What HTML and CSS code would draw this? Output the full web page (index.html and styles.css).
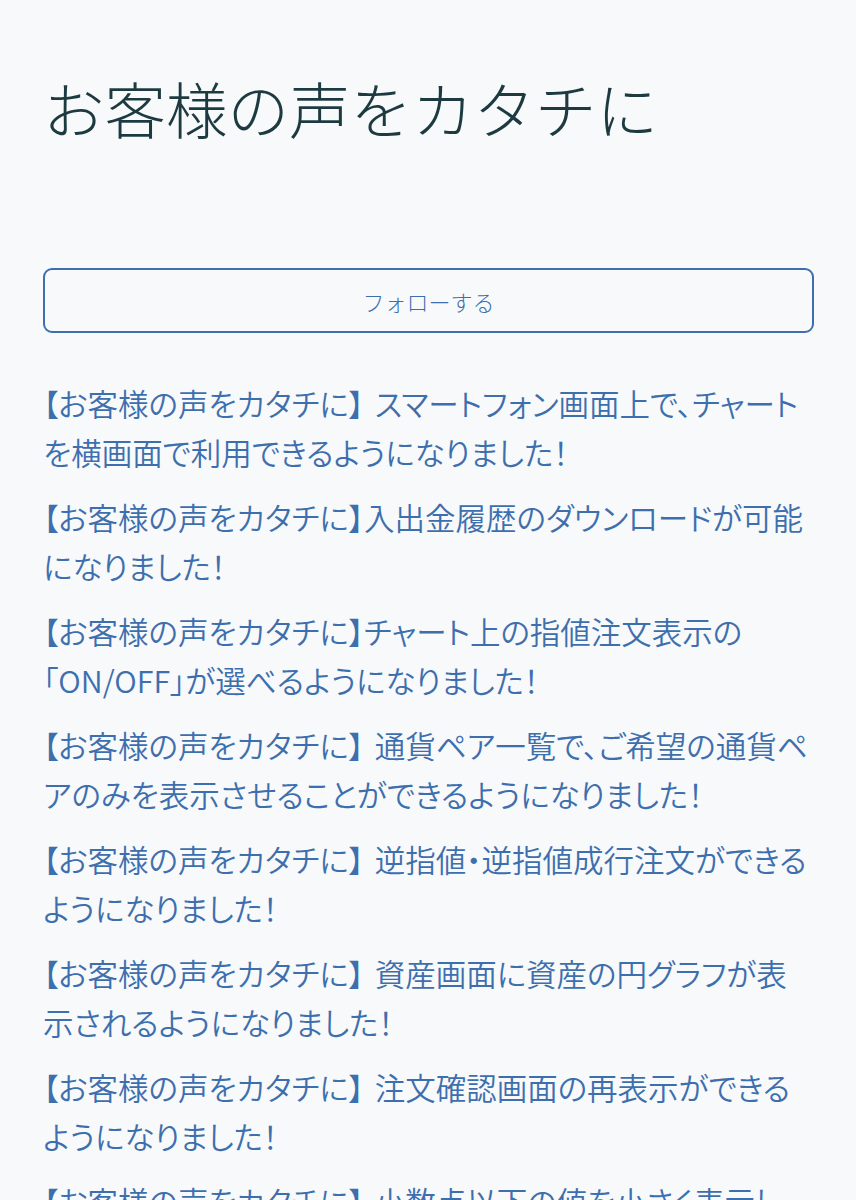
FILE: index.html
```html
<!DOCTYPE html>
<html lang="ja">
<head>
<meta charset="utf-8">
<link rel="stylesheet" href="styles.css">
</head>
<body>
<main class="page">
  <h1 class="title">お客様の声をカタチに</h1>
  <button class="follow">フォローする</button>
  <ul class="list">
    <li><a href="#">【お客様の声をカタチに】 スマートフォン画面上で、チャートを横画面で利用できるようになりました！</a></li>
    <li><a href="#">【お客様の声をカタチに】入出金履歴のダウンロードが可能になりました！</a></li>
    <li><a href="#">【お客様の声をカタチに】チャート上の指値注文表示の「ON/OFF」が選べるようになりました！</a></li>
    <li><a href="#">【お客様の声をカタチに】 通貨ペア一覧で、ご希望の通貨ペアのみを表示させることができるようになりました！</a></li>
    <li><a href="#">【お客様の声をカタチに】 逆指値・逆指値成行注文ができるようになりました！</a></li>
    <li><a href="#">【お客様の声をカタチに】 資産画面に資産の円グラフが表示されるようになりました！</a></li>
    <li><a href="#">【お客様の声をカタチに】 注文確認画面の再表示ができるようになりました！</a></li>
    <li><a href="#">【お客様の声をカタチに】 小数点以下の値を小さく表示し、見やすくなりました！</a></li>
  </ul>
</main>
</body>
</html>
```
FILE: styles.css
```css
html, body {
  margin: 0;
  padding: 0;
  background: #f8f9fa;
}
body {
  font-family: "Noto Sans CJK JP", "Noto Sans", sans-serif;
}
.page {
  padding: 0 42px 0 43px;
}
.title {
  margin: 0;
  padding-top: 62px;
  font-size: 61.5px;
  line-height: 92px;
  font-weight: 300;
  color: #1c3a40;
  letter-spacing: 0;
}
.follow {
  display: block;
  width: 100%;
  height: 65px;
  margin-top: 114px;
  border: 2px solid #3d6fae;
  border-radius: 9px;
  background: transparent;
  color: #3d6fae;
  font-family: inherit;
  font-size: 22px;
  font-weight: 300;
}
.list {
  list-style: none;
  margin: 46px 0 0;
  padding: 0;
}
.list li {
  margin-bottom: 16px;
  font-size: 30.5px;
  line-height: 49px;
  font-weight: 350;
  font-feature-settings: "palt";
  word-spacing: 4px;
}
.list a {
  color: #3d6fae;
  text-decoration: none;
}
```
